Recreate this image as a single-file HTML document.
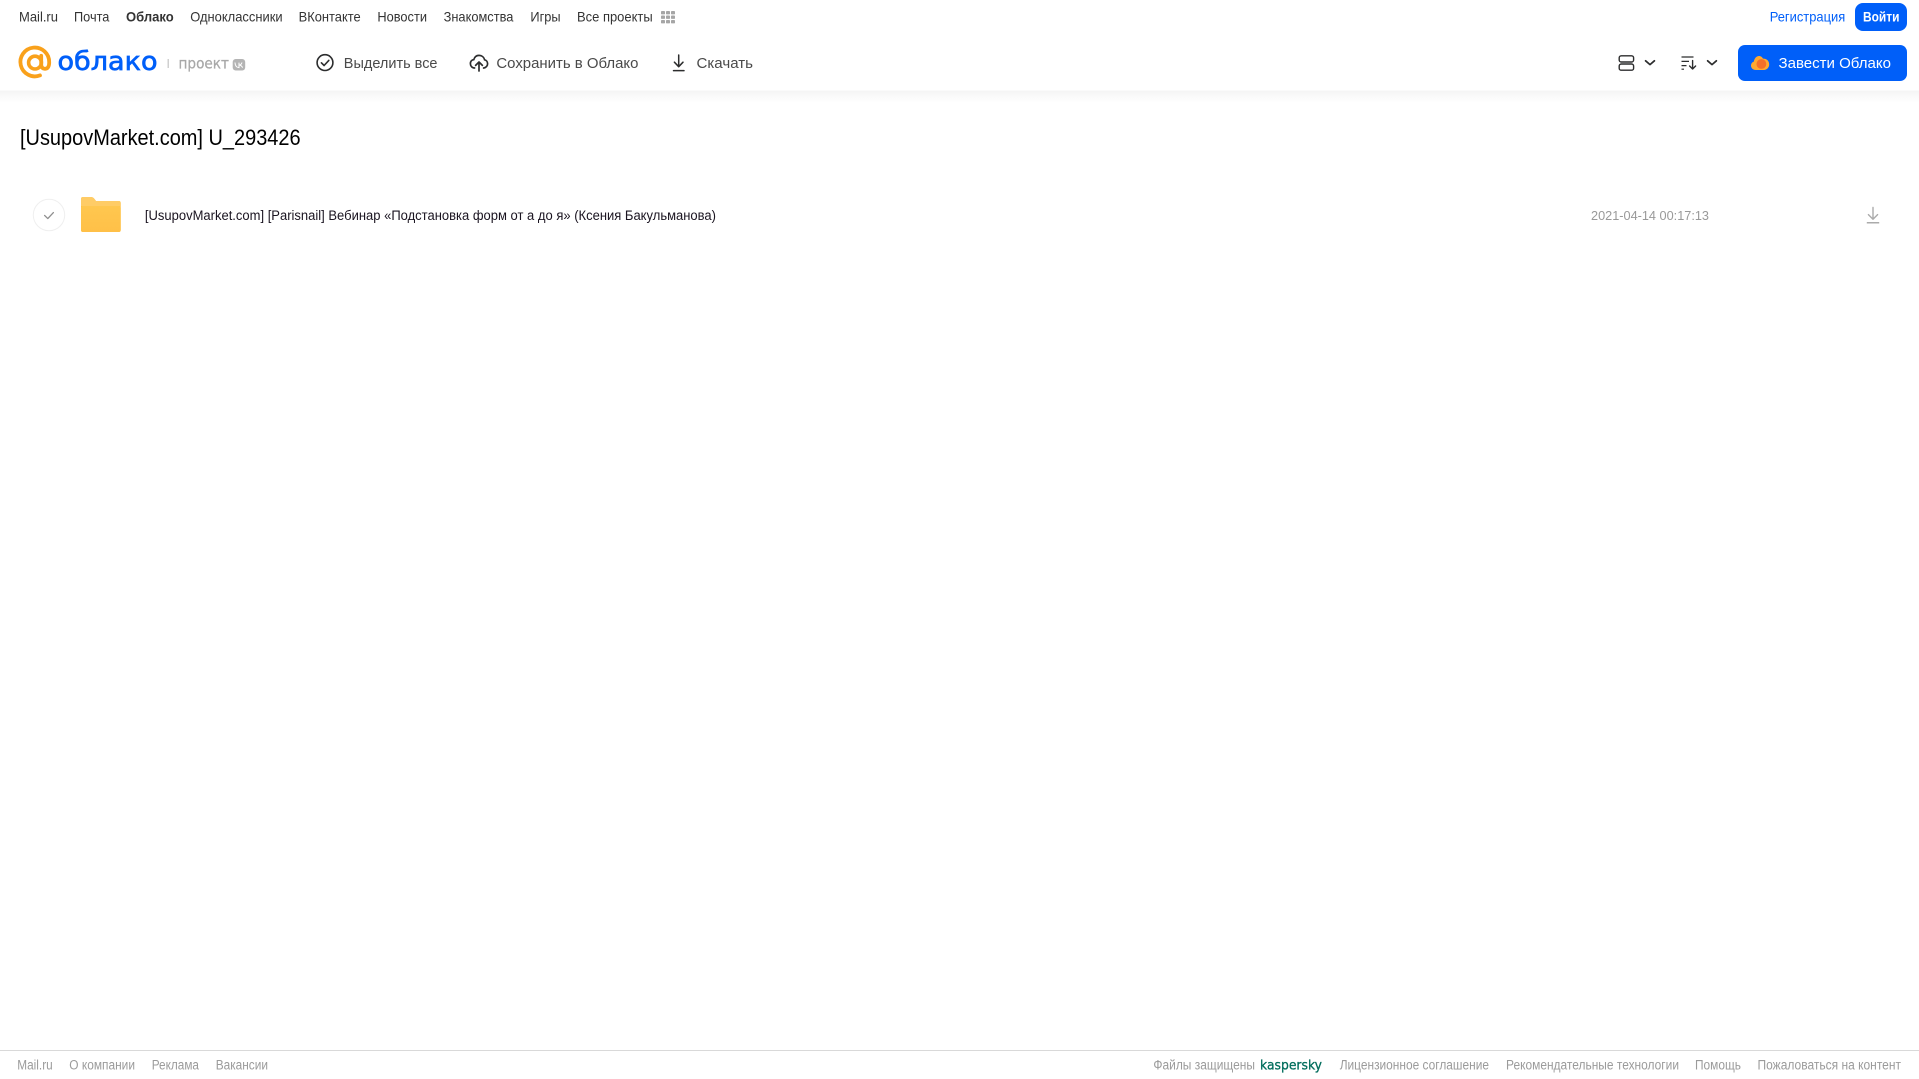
<!DOCTYPE html>
<html lang="ru">
<head>
<meta charset="utf-8">
<title>[UsupovMarket.com] U_293426</title>
<style>
html,body{margin:0;padding:0;background:#fff;overflow:hidden}
svg{display:block}
text{font-family:"Liberation Sans",sans-serif;white-space:pre}
.n{font-size:14px;fill:#333}
.t{font-size:14.5px;fill:#4a4a4a}
.f{font-size:13.5px;fill:#9b9b9b}
.d{font-family:"DejaVu Sans",sans-serif}
</style>
</head>
<body>
<svg width="1919" height="1079" viewBox="0 0 1919 1079" xmlns="http://www.w3.org/2000/svg">
<defs>
<linearGradient id="sh" x1="0" y1="0" x2="0" y2="1"><stop offset="0" stop-color="#f4f4f4"/><stop offset="1" stop-color="#fff"/></linearGradient>
<linearGradient id="fo" x1="0" y1="0" x2="0" y2="1"><stop offset="0" stop-color="#ffc74f"/><stop offset="1" stop-color="#ffc048"/></linearGradient>
</defs>
<rect width="1919" height="1079" fill="#fff"/>
<rect y="90.5" width="1919" height="12" fill="url(#sh)"/>

<!-- top nav -->
<text class="n" x="19" y="21.4" textLength="39" lengthAdjust="spacingAndGlyphs">Mail.ru</text>
<text class="n" x="74" y="21.4" textLength="35.4" lengthAdjust="spacingAndGlyphs">Почта</text>
<text class="n" x="126" y="21.4" textLength="47.7" lengthAdjust="spacingAndGlyphs" style="font-weight:700">Облако</text>
<text class="n" x="190.2" y="21.4" textLength="92.4" lengthAdjust="spacingAndGlyphs">Одноклассники</text>
<text class="n" x="298.6" y="21.4" textLength="62.1" lengthAdjust="spacingAndGlyphs">ВКонтакте</text>
<text class="n" x="377.4" y="21.4" textLength="49.6" lengthAdjust="spacingAndGlyphs">Новости</text>
<text class="n" x="443.6" y="21.4" textLength="69.8" lengthAdjust="spacingAndGlyphs">Знакомства</text>
<text class="n" x="530.4" y="21.4" textLength="30.2" lengthAdjust="spacingAndGlyphs">Игры</text>
<text class="n" x="577" y="21.4" textLength="75.7" lengthAdjust="spacingAndGlyphs">Все проекты</text>
<g fill="#a6a6a6">
<rect x="661" y="11" width="4" height="3.4" rx=".8"/><rect x="666" y="11" width="4" height="3.4" rx=".8"/><rect x="671" y="11" width="4" height="3.4" rx=".8"/>
<rect x="661" y="15.5" width="4" height="3.4" rx=".8"/><rect x="666" y="15.5" width="4" height="3.4" rx=".8"/><rect x="671" y="15.5" width="4" height="3.4" rx=".8"/>
<rect x="661" y="20" width="4" height="3.4" rx=".8"/><rect x="666" y="20" width="4" height="3.4" rx=".8"/><rect x="671" y="20" width="4" height="3.4" rx=".8"/>
</g>
<text x="1769.7" y="21.4" fill="#005ff9" textLength="75.5" lengthAdjust="spacingAndGlyphs" style="font-size:14px">Регистрация</text>
<rect x="1855" y="3" width="52" height="28" rx="8" fill="#005ff9"/>
<text x="1863" y="21.4" fill="#fff" textLength="36.5" lengthAdjust="spacingAndGlyphs" style="font-size:13.5px;font-weight:700">Войти</text>

<!-- logo -->
<path d="M40 75.4 A14.4 14.4 0 1 1 49.2 62.4 C49.2 66.6 47.6 68.8 45 68.8 C42.4 68.8 41.2 67 41.2 64.4 L41.2 55.8" fill="none" stroke="#f9a11b" stroke-width="3.8" stroke-linecap="round"/>
<circle cx="35" cy="62.6" r="6.4" fill="none" stroke="#f9a11b" stroke-width="3.6"/>
<text class="d" x="57.5" y="70.2" fill="#005ff9" stroke="#005ff9" stroke-width=".7" textLength="100" lengthAdjust="spacingAndGlyphs" style="font-size:26px">облако</text>
<rect x="167.6" y="59" width="1.2" height="9" fill="#c4c4c4"/>
<text class="d" x="178.5" y="68.4" fill="#a8a8a8" stroke="#a8a8a8" stroke-width=".25" textLength="50.5" lengthAdjust="spacingAndGlyphs" style="font-size:15px">проект</text>
<rect x="232.7" y="59" width="12.5" height="11.5" rx="3" fill="#b4b4b4"/>
<path d="M235 62.5 C235.2 66 236.6 67.6 239 67.6 L239 62.6 M239.2 65 C240.6 65 241.6 63.8 242 62.5 M239.2 65 C240.8 65.2 242 66.4 242.6 67.6" fill="none" stroke="#fff" stroke-width="1"/>

<!-- toolbar -->
<circle cx="325" cy="62.6" r="7.9" fill="none" stroke="#2c2d2e" stroke-width="1.6"/>
<path d="M321.4 62.8 L324.1 65.5 L328.8 60.4" fill="none" stroke="#2c2d2e" stroke-width="1.6" stroke-linecap="round" stroke-linejoin="round"/>
<text class="t" x="343.8" y="68" textLength="93.7" lengthAdjust="spacingAndGlyphs">Выделить все</text>

<path d="M474.6 68 C471.8 67.8 470.4 65.8 470.4 63.6 C470.4 61.4 471.8 59.8 473.8 59.6 C474.6 57 476.6 55.4 479 55.4 C481.8 55.4 484 57.2 484.6 59.8 C486.4 60.2 487.6 61.8 487.6 63.8 C487.6 65.8 486 67.8 483.6 68" fill="none" stroke="#2c2d2e" stroke-width="1.7" stroke-linecap="round"/>
<path d="M479 71 L479 62 M475.6 65.4 L479 62 L482.4 65.4" fill="none" stroke="#2c2d2e" stroke-width="1.7" stroke-linecap="round" stroke-linejoin="round"/>
<text class="t" x="496.4" y="68" textLength="142" lengthAdjust="spacingAndGlyphs">Сохранить в Облако</text>

<path d="M678.7 55 L678.7 66.5 M674.4 62.2 L678.7 66.7 L683 62.2 M673.5 70.6 L684 70.6" fill="none" stroke="#2c2d2e" stroke-width="1.5" stroke-linecap="round" stroke-linejoin="round"/>
<text class="t" x="696.5" y="68" textLength="56.5" lengthAdjust="spacingAndGlyphs">Скачать</text>

<rect x="1619.2" y="55.8" width="14.4" height="6.2" rx="2" fill="none" stroke="#2c2d2e" stroke-width="1.4"/>
<rect x="1619.2" y="64" width="14.4" height="6.2" rx="2" fill="none" stroke="#2c2d2e" stroke-width="1.4"/>
<path d="M1645.6 60.8 L1650 64.6 L1654.4 60.8" fill="none" stroke="#2c2d2e" stroke-width="1.7" stroke-linecap="round" stroke-linejoin="round"/>
<path d="M1681.5 57 L1693.5 57 M1681.5 61.4 L1689 61.4 M1681.5 65.6 L1686.5 65.6 M1681.5 69.2 L1684 69.2" fill="none" stroke="#2c2d2e" stroke-width="1.2"/>
<path d="M1692.6 60.6 L1692.6 68.8 M1689.6 66 L1692.6 69 L1695.6 66" fill="none" stroke="#2c2d2e" stroke-width="1.4" stroke-linecap="round" stroke-linejoin="round"/>
<path d="M1707.6 60.8 L1712 64.6 L1716.4 60.8" fill="none" stroke="#2c2d2e" stroke-width="1.7" stroke-linecap="round" stroke-linejoin="round"/>

<rect x="1738" y="45" width="169" height="36" rx="7" fill="#005ff9"/>
<path d="M1756 70 C1752.6 70 1751 67.6 1751 65.6 C1751 63.4 1752.4 62 1753.8 61.6 C1754.4 58.6 1756.2 56 1759 56 C1761 56 1762.2 57.2 1763 58.6 C1766.2 58.4 1769.2 60.6 1769.2 64.4 C1769.2 67.6 1766.8 70 1764 70 Z" fill="#ffa930"/>
<circle cx="1761.4" cy="64" r="4.9" fill="#f4702a"/>
<text x="1778.5" y="68" fill="#fff" textLength="112.5" lengthAdjust="spacingAndGlyphs" style="font-size:14.5px">Завести Облако</text>

<!-- title -->
<text x="20" y="145" fill="#000" textLength="280.6" lengthAdjust="spacingAndGlyphs" style="font-size:22px">[UsupovMarket.com] U_293426</text>

<!-- row -->
<circle cx="49" cy="215" r="15.7" fill="#fff" stroke="#efefef" stroke-width="1"/>
<path d="M44.6 215.4 L47.8 218.6 L53.4 212.6" fill="none" stroke="#8f8f8f" stroke-width="1.3" stroke-linecap="round" stroke-linejoin="round"/>
<path d="M81 199 Q81 197 83 197 L91 197 Q93 197 94.5 199 L96 201 L118.7 201 Q120.7 201 120.7 203 L120.7 230 Q120.7 232 118.7 232 L83 232 Q81 232 81 230 Z" fill="#ffc03f"/>
<path d="M81 199 Q81 197 83 197 L91 197 Q93 197 94.5 199 L96 201 L118.7 201 Q120.7 201 120.7 203 L120.7 206 L81 206 Z" fill="#ffcc66"/>
<rect x="81" y="206" width="39.7" height="26" rx="2" fill="url(#fo)"/>
<text x="144.9" y="220" fill="#1a1420" textLength="571.1" lengthAdjust="spacingAndGlyphs" style="font-size:13.5px">[UsupovMarket.com] [Parisnail] Вебинар «Подстановка форм от а до я» (Ксения Бакульманова)</text>
<text x="1591" y="220" fill="#999" textLength="118" lengthAdjust="spacingAndGlyphs" style="font-size:13px">2021-04-14 00:17:13</text>
<path d="M1873 207.5 L1873 219 M1868.4 214.6 L1873 219.2 L1877.6 214.6" fill="none" stroke="#ababab" stroke-width="1.4" stroke-linecap="round" stroke-linejoin="round"/>
<rect x="1866.8" y="222" width="12.4" height="1.5" fill="#ababab"/>

<!-- footer -->
<rect y="1050" width="1919" height="1" fill="#d9d9d9"/>
<text class="f" x="17.3" y="1069.4" textLength="35.4" lengthAdjust="spacingAndGlyphs">Mail.ru</text>
<text class="f" x="69.3" y="1069.4" textLength="65.7" lengthAdjust="spacingAndGlyphs">О компании</text>
<text class="f" x="151.7" y="1069.4" textLength="47.3" lengthAdjust="spacingAndGlyphs">Реклама</text>
<text class="f" x="215.7" y="1069.4" textLength="52.3" lengthAdjust="spacingAndGlyphs">Вакансии</text>
<text class="f" x="1153.4" y="1069.4" textLength="101.6" lengthAdjust="spacingAndGlyphs">Файлы защищены</text>
<text class="d" x="1260" y="1069.4" fill="#006d5c" stroke="#006d5c" stroke-width=".3" textLength="62" lengthAdjust="spacingAndGlyphs" style="font-size:13.5px">kaspersky</text>
<text class="f" x="1339.7" y="1069.4" textLength="149.3" lengthAdjust="spacingAndGlyphs">Лицензионное соглашение</text>
<text class="f" x="1506" y="1069.4" textLength="173" lengthAdjust="spacingAndGlyphs">Рекомендательные технологии</text>
<text class="f" x="1695" y="1069.4" textLength="46" lengthAdjust="spacingAndGlyphs">Помощь</text>
<text class="f" x="1757.5" y="1069.4" textLength="143.5" lengthAdjust="spacingAndGlyphs">Пожаловаться на контент</text>
</svg>
</body>
</html>
